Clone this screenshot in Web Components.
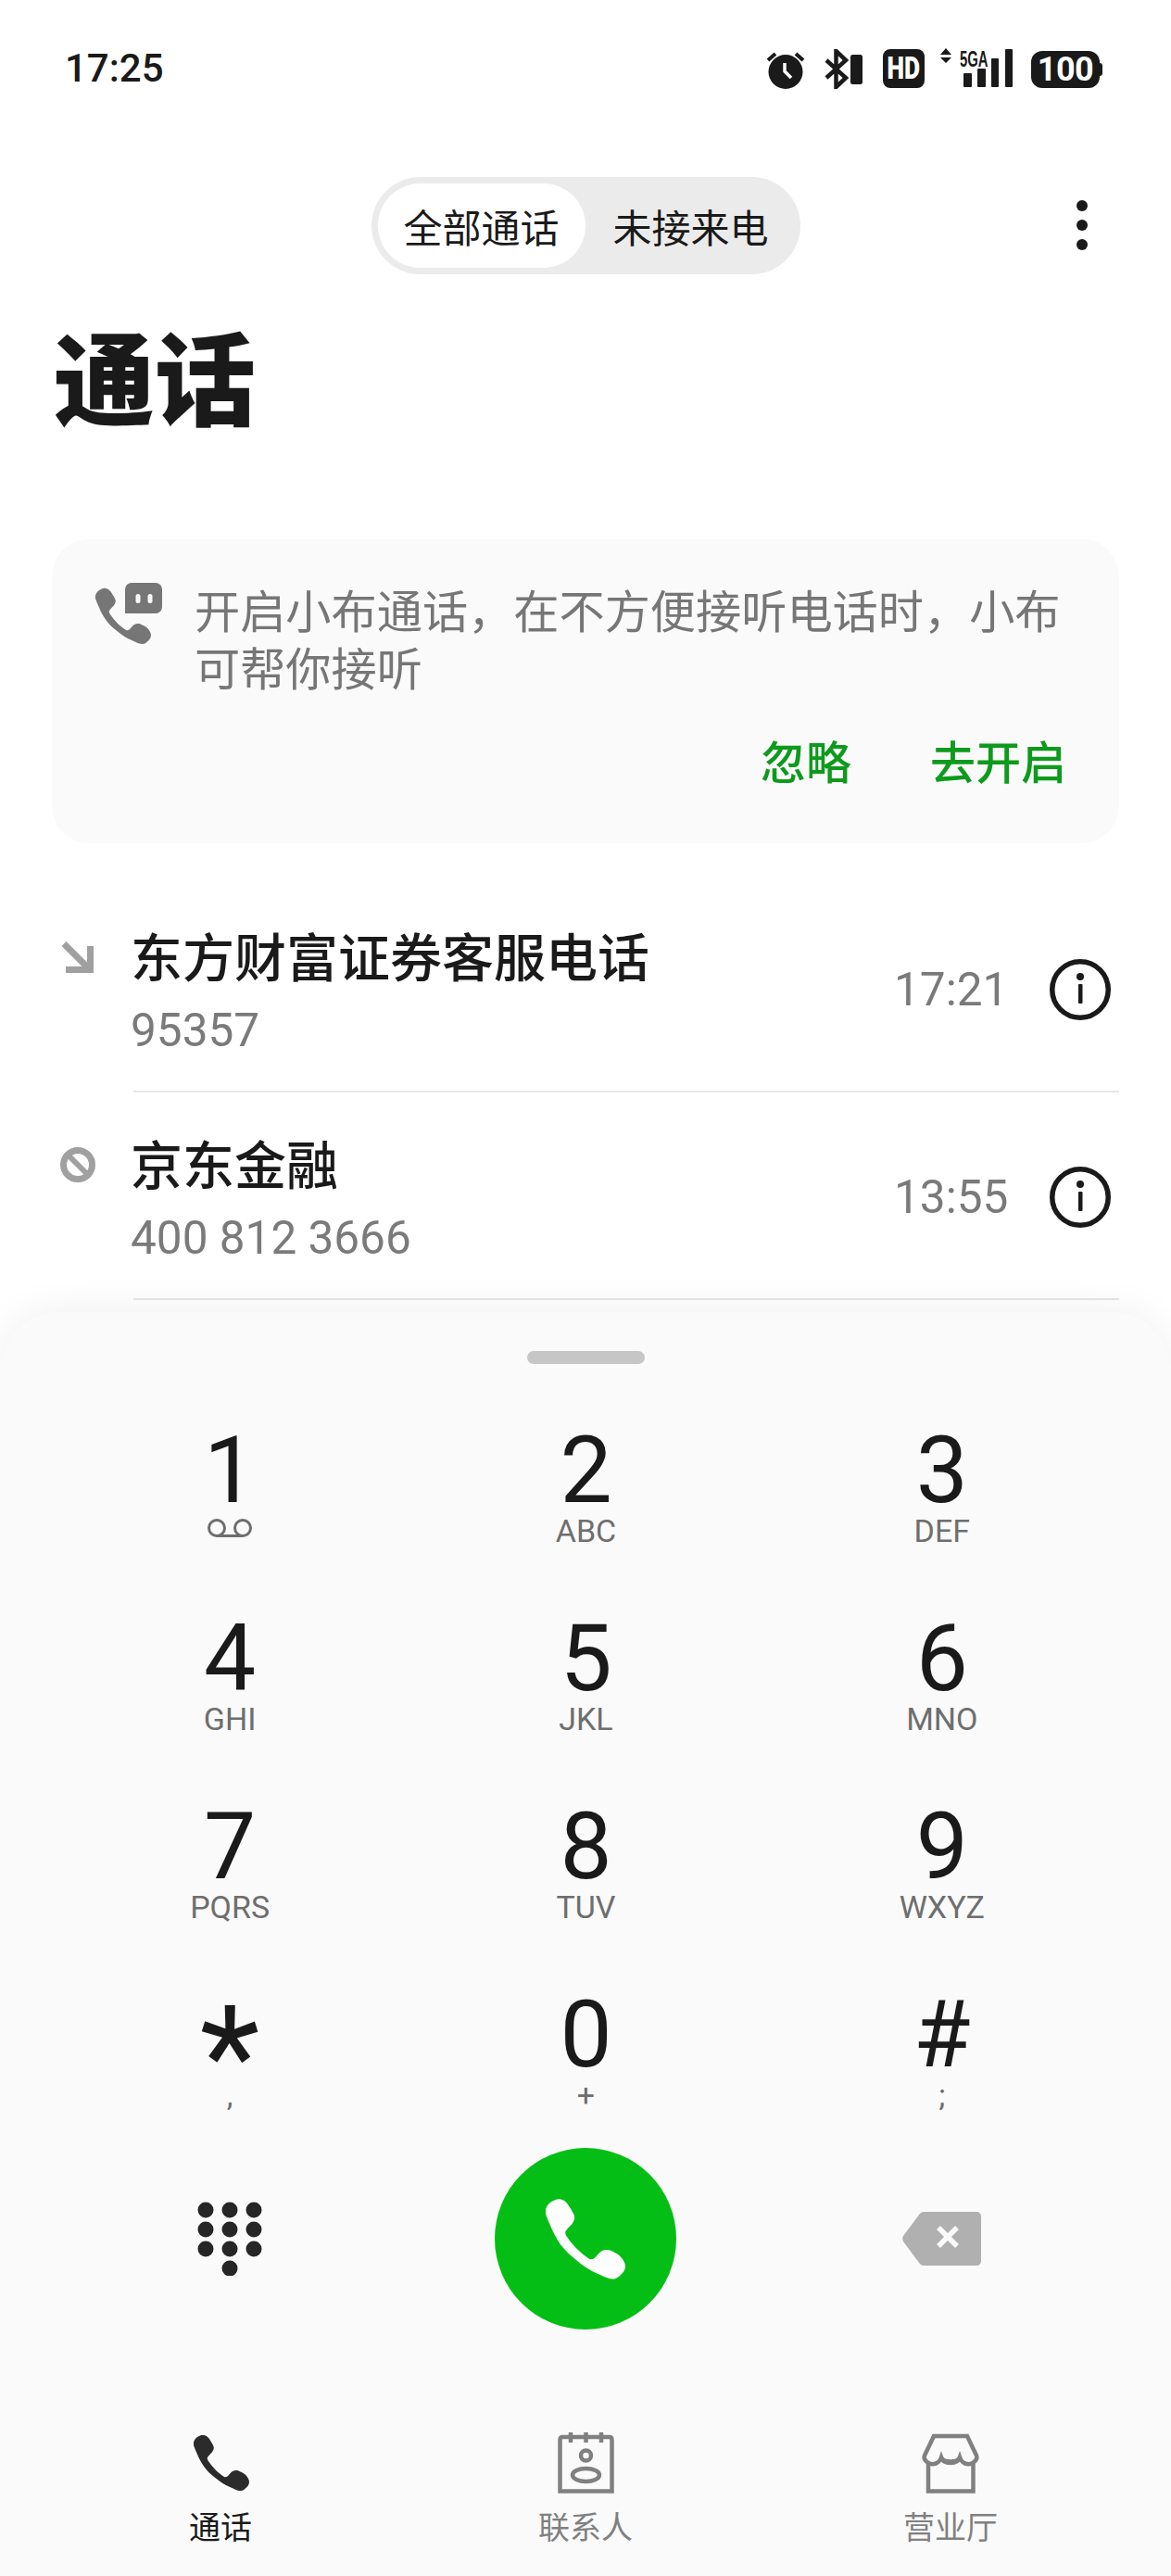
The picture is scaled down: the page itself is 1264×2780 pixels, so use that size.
<!DOCTYPE html>
<html lang="zh-CN">
<head>
<meta charset="utf-8">
<title>通话</title>
<style>
  html, body {
    margin: 0;
    padding: 0;
    background: #fff;
    font-family: Roboto, "Noto Sans CJK SC", sans-serif;
    color: #1a1a1a;
  }
  body { width: 1264px; height: 2780px; overflow: hidden; }
</style>
</head>
<body>
<phone-status></phone-status>
<call-header></call-header>
<notice-card></notice-card>
<call-row name="东方财富证券客服电话" sub="95357" time="17:21" kind="in"></call-row>
<call-row name="京东金融" sub="400 812 3666" time="13:55" kind="block"></call-row>
<dial-sheet>
  <dial-key digit="1" voicemail></dial-key>
  <dial-key digit="2" sub="ABC"></dial-key>
  <dial-key digit="3" sub="DEF"></dial-key>
  <dial-key digit="4" sub="GHI"></dial-key>
  <dial-key digit="5" sub="JKL"></dial-key>
  <dial-key digit="6" sub="MNO"></dial-key>
  <dial-key digit="7" sub="PQRS"></dial-key>
  <dial-key digit="8" sub="TUV"></dial-key>
  <dial-key digit="9" sub="WXYZ"></dial-key>
  <dial-key digit="*" sub=","></dial-key>
  <dial-key digit="0" sub="+"></dial-key>
  <dial-key digit="#" sub=";"></dial-key>
</dial-sheet>

<script>
// handset outline, drawn in a 100x100 box
const PHONE = "M9 2C13 0 16 -1 19 0C24 1 27 5 29 8C32 13 35 17 36 21C37 25 35 28 33 31C30 34 27 37 25 40C24 42 25 44 26 46C30 52 34 57 39 62C44 67 49 71 55 75C57 76 59 75 61 74C64 71 67 67 70 65C74 63 77 63 81 64C85 66 90 68 93 71C97 75 100 80 100 84C100 88 98 91 95 94C92 97 89 100 85 100C80 100 75 98 71 96C62 92 54 88 47 83C38 76 30 70 23 62C17 55 13 48 9 40C6 33 3 27 1 21C0 18 -1 15 0 13C1 8 5 4 9 2Z";

function define(tag, html, setup) {
  const template = document.createElement("template");
  template.innerHTML = html;
  customElements.define(tag, class extends HTMLElement {
    constructor() {
      super();
      const shadow = this.attachShadow({ mode: "open" });
      shadow.appendChild(document.importNode(template.content, true));
    }
    connectedCallback() {
      if (setup) setup(this.shadowRoot, this);
    }
  });
}

define("phone-status", `
<style>
  :host {
    display: flex;
    justify-content: space-between;
    align-items: flex-start;
    height: 191px;
    padding: 52px 77px 0 70px;
    box-sizing: border-box;
  }
  .time { font: 500 42px/44px Roboto, sans-serif; color: #1a1a1a; }
  .icons { display: flex; align-items: flex-start; }
  svg { display: block; }
  .hd {
    width: 45px; height: 42px; margin: 1px 0 0 20px;
    background: #1a1a1a; border-radius: 8px; color: #fff;
    font: 900 33px/42px Roboto, sans-serif; text-align: center;
  }
  .hd span { display: inline-block; transform: scaleX(.8); }
  .net { position: relative; width: 78px; height: 43px; margin-left: 17px; }
  .net svg { position: absolute; left: 0; top: 0; }
  .g5 {
    position: absolute; left: 21px; top: 0;
    font: 700 24px/24px "Liberation Sans", sans-serif; color: #1a1a1a;
    transform: scaleX(.62); transform-origin: left top;
  }
  .batt {
    position: relative; width: 74px; height: 40px; margin: 3px 0 0 20px;
    background: #1a1a1a; border-radius: 12px; color: #fff;
    font: 700 36px/40px Roboto, sans-serif; text-align: center; letter-spacing: -.5px;
  }
  .batt::after {
    content: ""; position: absolute; right: -3px; top: 13px; width: 3px; height: 14px;
    background: #1a1a1a; border-radius: 0 3px 3px 0;
  }
</style>
<div class="time">17:25</div>
<div class="icons">
  <svg width="42" height="43" viewBox="0 0 42 43" style="margin-top:1px">
    <circle cx="21" cy="24.5" r="18.5" fill="#1a1a1a"/>
    <path d="M2 12 L10 5 M40 12 L32 5" stroke="#1a1a1a" stroke-width="4"/>
    <path d="M20 15V24L27 31" stroke="#fff" stroke-width="3.5" fill="none"/>
  </svg>
  <svg width="44" height="43" viewBox="0 0 44 43" style="margin:1px 0 0 20px">
    <path d="M3 12L24 31L13.5 41V2L24 12L3 31" fill="none" stroke="#1a1a1a" stroke-width="4.5"/>
    <rect x="29" y="6" width="13" height="32" rx="2.5" fill="#1a1a1a"/>
  </svg>
  <div class="hd"><span>HD</span></div>
  <div class="net">
    <svg width="78" height="43" viewBox="0 0 78 43">
      <path d="M0 7L6 0L12 7ZM0 10L12 10L6 16Z" fill="#1a1a1a"/>
      <rect x="25" y="27" width="9" height="15" rx="1" fill="#1a1a1a"/>
      <rect x="40" y="22" width="9" height="20" rx="1" fill="#1a1a1a"/>
      <rect x="55" y="11" width="8" height="31" rx="1" fill="#1a1a1a"/>
      <rect x="70" y="1" width="8" height="41" rx="1" fill="#1a1a1a"/>
    </svg>
    <div class="g5">5GA</div>
  </div>
  <div class="batt">100</div>
</div>
`);

define("call-header", `
<style>
  :host { display: block; height: 391px; box-sizing: border-box; }
  .top { display: flex; justify-content: center; position: relative; height: 105px; }
  .seg {
    display: flex; width: 463px; height: 105px; box-sizing: border-box; padding: 7px 6px 7px 7px;
    background: #ebebeb; border-radius: 53px;
    font: 400 42px/91px "Noto Sans CJK SC", sans-serif; color: #1a1a1a;
  }
  .on { width: 224px; background: #fff; border-radius: 46px; text-align: center; }
  .off { flex: 1; text-align: center; padding-left: 2px; }
  .menu { position: absolute; right: 90px; top: 25px; display: flex; flex-direction: column; gap: 9px; }
  .menu i { display: block; width: 12px; height: 12px; border-radius: 50%; background: #1a1a1a; }
  h1 {
    margin: 46px 0 0 58px; font: 900 109px/124px "Noto Sans CJK SC", sans-serif; color: #1a1a1a;
  }
</style>
<div class="top">
  <div class="seg"><div class="on">全部通话</div><div class="off">未接来电</div></div>
  <div class="menu"><i></i><i></i><i></i></div>
</div>
<h1>通话</h1>
`);

define("notice-card", `
<style>
  :host {
    display: block; margin: 0 56px 45px; height: 328px; box-sizing: border-box;
    background: #fafafa; border-radius: 40px; padding: 47px 57px 0 47px;
    font-family: "Noto Sans CJK SC", sans-serif;
  }
  .body { display: flex; align-items: flex-start; }
  svg { flex: none; display: block; }
  p {
    margin: -3px -18px 0 35px; font-size: 49.2px; line-height: 62px; color: #767676;
  }
  .acts {
    display: flex; justify-content: flex-end; gap: 85px; margin-top: 37px;
    font-size: 49px; line-height: 66px; font-weight: 500; color: #0e9a1c;
  }
</style>
<div class="body">
  <svg width="72" height="66" viewBox="0 0 72 66">
    <rect x="32" y="0" width="40" height="33" rx="7" fill="#767676"/>
    <path d="M32 26V33H39Z" fill="#767676"/>
    <rect x="43.5" y="12" width="5" height="10" rx="2.5" fill="#fafafa"/>
    <rect x="56.5" y="12" width="5" height="10" rx="2.5" fill="#fafafa"/>
    <g transform="translate(0 6) scale(.6)"><path d="${PHONE}" fill="#767676"/></g>
  </svg>
  <p>开启小布通话，在不方便接听电话时，小布可帮你接听</p>
</div>
<div class="acts"><span>忽略</span><span>去开启</span></div>
`);

define("call-row", `
<style>
  :host {
    display: flex; height: 224px; box-sizing: border-box; padding: 0 0 0 66px;
  }
  .mark { flex: none; width: 78px; padding-top: 61px; box-sizing: border-box; }
  svg { display: block; }
  .main {
    flex: 1; margin-right: 56px; display: flex; align-items: center;
    border-bottom: 2px solid #e6e6e6; height: 224px; box-sizing: border-box;
    padding: 4px 9px 0 0;
  }
  .text { flex: 1; align-self: flex-start; margin-left: -3px; padding-top: 33px; }
  .name { font: 500 56px/76px "Noto Sans CJK SC", sans-serif; color: #1a1a1a; }
  .sub { font: 400 49.5px/56px Roboto, sans-serif; color: #7a7a7a; margin-top: 16px; }
  .time { width: 168px; font: 400 49.5px/56px Roboto, sans-serif; color: #7a7a7a; }
  .main > svg { flex: none; }
</style>
<div class="mark"></div>
<div class="main">
  <div class="text"><div class="name"></div><div class="sub"></div></div>
  <div class="time"></div>
  <svg width="66" height="66" viewBox="0 0 66 66">
    <circle cx="33" cy="33" r="30.25" fill="none" stroke="#1a1a1a" stroke-width="5.5"/>
    <circle cx="33" cy="19" r="4" fill="#1a1a1a"/>
    <rect x="31" y="27" width="4.5" height="21" rx="1" fill="#1a1a1a"/>
  </svg>
</div>
`, (root, host) => {
  root.querySelector(".name").textContent = host.getAttribute("name");
  root.querySelector(".sub").textContent = host.getAttribute("sub");
  root.querySelector(".time").textContent = host.getAttribute("time");
  root.querySelector(".mark").innerHTML = host.getAttribute("kind") === "in"
    ? `<svg width="35" height="34" viewBox="0 0 35 34"><path d="M3 2.5L30 29.5M31.5 5V30.5H5" fill="none" stroke="#a0a0a0" stroke-width="7"/></svg>`
    : `<svg width="38" height="38" viewBox="0 0 38 38" style="margin:-2px 0 0 -1px"><circle cx="19" cy="19" r="15.5" fill="none" stroke="#a0a0a0" stroke-width="7"/><path d="M8 8L30 30" stroke="#a0a0a0" stroke-width="6"/></svg>`;
});

define("dial-key", `
<style>
  :host { display: block; text-align: center; }
  .d { font: 400 100px/74px Roboto, sans-serif; color: #1a1a1a; height: 74px; }
  .d.star { font-size: 150px; line-height: 122px; }
  .s { font: 400 34px/40px Roboto, sans-serif; color: #6e6e6e; margin-top: 8px; }
  svg { display: block; margin: 15px auto 0; }
</style>
<div class="d"></div>
<div class="s"></div>
`, (root, host) => {
  const digit = host.getAttribute("digit");
  const d = root.querySelector(".d");
  d.textContent = digit;
  if (digit === "*") d.classList.add("star");
  const s = root.querySelector(".s");
  if (host.hasAttribute("voicemail")) {
    s.innerHTML = `<svg width="48" height="20" viewBox="0 0 48 20"><circle cx="10" cy="10" r="8.5" fill="none" stroke="#6e6e6e" stroke-width="3"/><circle cx="38" cy="10" r="8.5" fill="none" stroke="#6e6e6e" stroke-width="3"/><path d="M10 18.5H38" stroke="#6e6e6e" stroke-width="3"/></svg>`;
  } else {
    s.textContent = host.getAttribute("sub");
  }
});

define("tab-item", `
<style>
  :host { display: flex; flex-direction: column; align-items: center; color: var(--c, #808080); }
  span { font: 400 34px/40px "Noto Sans CJK SC", sans-serif; margin-top: 15px; }
  .icon { height: 66px; }
</style>
<div class="icon"><slot name="icon"></slot></div>
<span><slot></slot></span>
`);

define("dial-sheet", `
<style>
  :host {
    display: block; position: relative; height: 1364px; box-sizing: border-box; margin-top: 13px;
    background: #fafafa; border-radius: 64px 64px 0 0;
    box-shadow: 0 -4px 40px rgba(0,0,0,.06);
    padding-top: 42px;
  }
  .handle { width: 127px; height: 14px; margin: 0 auto; border-radius: 7px; background: #c6c6c6; }
  .keys {
    display: grid; grid-template-columns: repeat(3, 1fr);
    grid-template-rows: repeat(3, 203px) 159px;
    margin: 78px 55px 0 56px;
  }
  .acts { display: grid; grid-template-columns: repeat(3, 1fr); align-items: center; margin: 0 55px 0 56px; height: 196px; }
  .acts > * { justify-self: center; }
  .call { width: 196px; height: 196px; border-radius: 50%; background: #04be15; display: flex; align-items: center; justify-content: center; }
  svg { display: block; }
  .tabs { display: grid; grid-template-columns: repeat(3, 394px); margin: 111px 0 0 41px; }
</style>
<div class="handle"></div>
<div class="keys"><slot></slot></div>
<div class="acts">
  <svg width="70" height="80" viewBox="0 0 70 80" fill="#262626">
    <circle cx="9" cy="9" r="8.5"/><circle cx="35" cy="9" r="8.5"/><circle cx="61" cy="9" r="8.5"/>
    <circle cx="9" cy="30" r="8.5"/><circle cx="35" cy="30" r="8.5"/><circle cx="61" cy="30" r="8.5"/>
    <circle cx="9" cy="51" r="8.5"/><circle cx="35" cy="51" r="8.5"/><circle cx="61" cy="51" r="8.5"/>
    <circle cx="35" cy="72" r="8.5"/>
  </svg>
  <div class="call">
    <svg width="86" height="87" viewBox="0 0 100 100"><path d="${PHONE}" fill="#fff"/></svg>
  </div>
  <svg width="85" height="58" viewBox="0 0 85 58">
    <path d="M23 0H80C83 0 85 2 85 5V53C85 56 83 58 80 58H23C21 58 19.5 57 18.5 55.5L1 32C0 30 0 28 1 26L18.5 2.5C19.5 1 21 0 23 0Z" fill="#b0b0b0"/>
    <path d="M39 17L59 37M59 17L39 37" stroke="#fafafa" stroke-width="5.5"/>
  </svg>
</div>
<div class="tabs">
  <tab-item style="--c:#1a1a1a">
    <svg slot="icon" width="60" height="60" viewBox="0 0 100 100" style="display:block;margin:3px 0 3px 2px"><path d="${PHONE}" fill="#2b2b2b"/></svg>
    通话
  </tab-item>
  <tab-item>
    <svg slot="icon" width="61" height="66" viewBox="0 0 61 66" fill="none" stroke="#808080" stroke-width="4.5" style="display:block">
      <path d="M2.5 63.5V8C2.5 6 3.5 5 5.5 5H55.5C57.5 5 58.5 6 58.5 8V63.5Z"/>
      <path d="M14 0V11M30.5 0V11M47 0V11"/>
      <circle cx="30.5" cy="25" r="5.5"/>
      <ellipse cx="30.5" cy="46" rx="14.5" ry="7"/>
    </svg>
    联系人
  </tab-item>
  <tab-item>
    <svg slot="icon" width="64" height="66" viewBox="0 0 64 66" fill="none" stroke="#808080" stroke-width="4.5" style="display:block">
      <path d="M14 4H50L60 25C62 30 55 35 50 34C46 34 43 30 42 27C40 33 24 33 22 27C21 30 18 34 14 34C9 35 2 30 4 25Z"/>
      <path d="M22 27C23 31 27 33 32 33C37 33 41 31 42 27"/>
      <path d="M8 34V63.5H56.5V34"/>
    </svg>
    营业厅
  </tab-item>
</div>
`);
</script>
</body>
</html>
